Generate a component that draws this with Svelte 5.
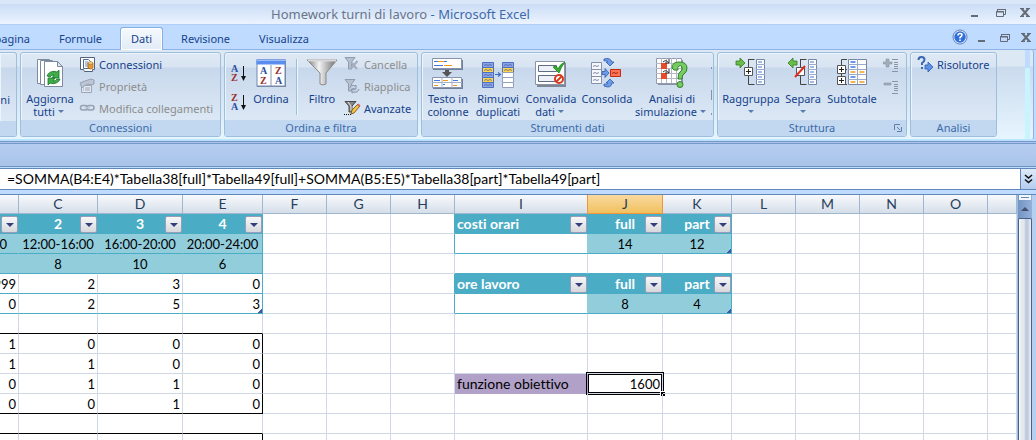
<script>
  const icons = {
    refresh: `<g transform="translate(2 0)"><g stroke="#7d8aa0" fill="#fff"><path d="M2.500 2.500h12l3 3v21h-15z"/><path d="M5.500 3.500h12l3 3v21h-15z"/><path d="M9.500 4.500h13l5 5v20h-18z"/><path d="M22.500 4.500v5h5z" fill="#dfe5ee"/></g><path d="M12 19a7 6 0 0 1 10-4l2-2v8h-7l2-3a4 4 0 0 0-4 2z" fill="#3fae49" stroke="#16742a" stroke-width=".8"/><path d="M25 22a7 6 0 0 1-10 4l-2 2v-7h7l-2 3a4 4 0 0 0 4-2z" fill="#3fae49" stroke="#16742a" stroke-width=".8"/></g>`,
    connections: `<path d="M1.500 1.500h14v12h-2v2h-8l-1-2h-3z" fill="#fff" stroke="#53627a"/><path d="M4.500 3.500h5l2 2v7h-7z" fill="#fff" stroke="#4d678f"/><path d="M6 6h3M6 8h3M6 10h3" stroke="#6c87b5"/><path d="M9 7h5v5q-2.500 2-5 0z" fill="#e29a33" stroke="#a05f13" stroke-width=".7"/><ellipse cx="11.500" cy="7" rx="2.500" ry="1.200" fill="#ffe2a0" stroke="#a05f13" stroke-width=".6"/>`,
    properties: `<path d="M2.500 7.500h10v7h-10z" fill="#e4e9f0" stroke="#9aa6b8"/><path d="M4 10h1M6 10h5M4 12h1M6 12h5" stroke="#9aa6b8"/><path d="M1 5l5-2 3-1 3-1 3 1v4l-3 1-3-1-4 2-2 2z" fill="#bcc6d5" stroke="#95a1b4"/>`,
    links: `<g fill="none" stroke="#96a1b2" stroke-width="1.600"><rect x="1.500" y="5.500" width="7" height="4.500" rx="2.200"/><rect x="8" y="5.500" width="7" height="4.500" rx="2.200"/><path d="M5.500 7.800h5.500" stroke="#c0c8d4"/></g>`,
    sort: `<g transform="translate(1 0)"><rect x="2" y="4" width="29" height="26" fill="#7d8ba3"/><rect x="2" y="3" width="28" height="26" fill="#fff" stroke="#7389ad"/><path d="M1.500 2.500h29v5h-29z" fill="#5b8def"/><path d="M2 3.500h28" stroke="#9dbcf8"/><path d="M16 8v21" stroke="#8b97ab"/><g class="letters"><text x="5" y="17" fill="#2d4f9e">A</text><text x="5" y="27" fill="#9c2b2b">Z</text><text x="20" y="17" fill="#9c2b2b">Z</text><text x="20" y="27" fill="#2d4f9e">A</text></g></g>`,
    funnel: `<defs><linearGradient id="metal"><stop offset="0" stop-color="#777"/><stop offset=".4" stop-color="#f3f3f3"/><stop offset="1" stop-color="#6c6c6c"/></linearGradient></defs><path d="M2 3h30L21 16v11q-3 2-6 0V16z" fill="url(#metal)" stroke="#8a8a8a"/><path d="M3 3.500h28" stroke="#d8d8d8" stroke-width="2"/>`,
    clear: `<path d="M1 1.500h10L7.500 6v7h-3V6z" fill="#b6bfcd" stroke="#8f9bae"/><path d="M7 6l6 7M13.500 5l-7 8" stroke="#a3adbd" stroke-width="2"/>`,
    reapply: `<path d="M1 1.500h10L7.500 6v7h-3V6z" fill="#b6bfcd" stroke="#8f9bae"/><path d="M6 10q1-4 5-2l1-1v4H8M15 11q-1 4-5 3l-2 1v-4h3" fill="#c8d1de" stroke="#8696b0"/>`,
    advanced: `<path d="M1 1.500h11L8 6v6H5V6z" fill="#858585" stroke="#484848"/><path d="M4 2l3 4v5" stroke="#eee" fill="none"/><path d="M0 14.500h8" stroke="#111" stroke-dasharray="1 1"/><path d="M7 14l1-4 6-6 2 2-6 7z" fill="#f5c445" stroke="#6b4a1a" stroke-width=".8"/><path d="M13 5l1.500-1.500 2 2L15 7z" fill="#d66a5c"/>`,
    textcols: `<path d="M2 3h30v10H2zM2 22h30v10H2z" fill="#71809a"/><path d="M1.500 1.500h29v10h-29zM1.500 20.500h29v10h-29z" fill="#fff" stroke="#8794ab"/><path d="M3 4.500h4M13 4.500h3M3 8.500h9M3 23.500h6M22 23.500h5M12 27.500h2" stroke="#4678dc"/><path d="M7 4.500h6M13 8.500h8M12 23.500h5M3 28.500h4M22 28.500h4" stroke="#f29a1f"/><path d="M1 25.500h30M11 20v11M21 20v11" stroke="#a5b1c4"/><path d="M14 13h4v2h3l-5 5-5-5h3z" fill="#555"/>`,
    dedupe: `<g stroke="#4f6fc0"><path d="M1.500 5.500h11v25h-11zM21.500 5.500h11v5h-11z" fill="#8ba4e6"/><path d="M1.500 10.500h11v5h-11zM1.500 20.500h11v5h-11zM21.500 10.500h11v5h-11z" fill="#ffd54a"/><path d="M21.500 15.500h11v5h-11zM21.500 20.500h11v5h-11zM21.500 25.500h11v5h-11z" fill="#fff" stroke="#93a0b8"/></g><path d="M3 8.500l2-1 2 1 2-1 2 1M3 13.500l2-1 2 1 2-1 2 1M3 18.500l2-1 2 1 2-1 2 1M3 23.500l2-1 2 1 2-1 2 1M3 28.500l2-1 2 1 2-1 2 1M23 8.500l2-1 2 1 2-1 2 1M23 13.500l2-1 2 1 2-1 2 1" fill="none" stroke="#405894" stroke-width=".7"/><path d="M14 17.500h5M17 15.500l2.500 2-2.500 2" fill="none" stroke="#3e6bc9" stroke-width="1.200"/>`,
    validate: `<path d="M3 6h29v24H3z" fill="#7d8797"/><path d="M1.500 4.500h29v23h-29z" fill="#fff" stroke="#8a94a5"/><path d="M4.500 8.500h18v6h-18zM4.500 18.500h18v6h-18z" fill="#eef1f7" stroke="#606c82"/><path d="M19 10l3-1 2 3q2-5 7-7-4 5-6 11z" fill="#35b02d" stroke="#17821b" stroke-width=".8"/><circle cx="25" cy="22" r="4" fill="#fff" stroke="#d63a1e" stroke-width="2"/><path d="M22 25l6-6" stroke="#d63a1e" stroke-width="2"/>`,
    consolidate: `<g transform="translate(-3 0)"><g fill="#f6f8fc" stroke="#8391ac"><path d="M4.500 5.500h10v7h-10zM4.500 12.500h10v7h-10zM4.500 19.500h10v7h-10z"/></g><path d="M6 9.500l2-1 2 1 2-1M6 16.500l2-1 2 1 2-1M6 23.500l2-1 2 1 2-1" fill="none" stroke="#7c8aa6"/><path d="M23.500 12.500h10v7h-10z" fill="#ff7354" stroke="#c02e16"/><path d="M25 16.500l2-1 2 1 2-1" stroke="#a22410" fill="none"/><g fill="#6d9be8" stroke="#2e5cab" stroke-width=".8"><path d="M15 14.500h3v-3l4 4.500-4 4.500v-3h-3z"/><path d="M17 2q6-2 8 3h2l-4 4-4-4h2q-1-2-4-1z"/><path d="M17 29q7 3 8-3h2l-4-4-4 4h2q-1 2-4 1z"/></g></g>`,
    whatif: `<path d="M3 3h25v25H3z" fill="#8792a6"/><path d="M1.500 1.500h25v25h-25z" fill="#fff" stroke="#929bad"/><path d="M6.500 1v25M11.500 1v25M16.500 1v25M21.500 1v25M1 6.500h25M1 11.500h25M1 16.500h25M1 21.500h25" stroke="#b2bac8"/><path d="M6 6h6v6H6zM6 16h6v6H6z" fill="#e84b2a"/><path d="M8 5q3-3 6 1M14 2v4h-4M8 15q3-3 6 1M14 12v4h-4" stroke="#333" fill="none"/><path d="M17 11q0-6 7-6 8 0 8 6 0 4-3 6-2 1-2 5h-4q0-6 2-7 3-2 2-5-1-2-3-1-2 1-1 4-5 1-6-2z" fill="#78ca62" stroke="#2d8426"/><circle cx="25" cy="27.500" r="3" fill="#78ca62" stroke="#2d8426"/>`,
    group: `<path d="M14.500 2.500h6M14.500 2v25.500h6" fill="none" stroke="#444"/><path d="M10.500 10.500h8v8h-8z" fill="#fff" stroke="#555"/><path d="M12 14.500h5M14.500 12v5" stroke="#222"/><path d="M22.500 2.500h8v25h-8z" fill="#fff" stroke="#7686a3"/><path d="M22 7.500h9M22 12.500h9M22 17.500h9M22 22.500h9" stroke="#9aabc7"/><path d="M24 5h4M24 10h4M24 15h4M24 20h4M24 25h4" stroke="#3f78df" stroke-width="1.200"/><path d="M2 4h4V1l5 5-5 5V8H2z" fill="#69bd48" stroke="#317c1e" stroke-width=".8"/>`,
    ungroup: `<path d="M14.500 2.500h6M14.500 2v25.500h6" fill="none" stroke="#444"/><path d="M10.500 10.500h8v8h-8z" fill="#fff" stroke="#555"/><path d="M9 20l10-11" stroke="#e12b20" stroke-width="2"/><path d="M22.500 2.500h8v25h-8z" fill="#fff" stroke="#7686a3"/><path d="M22 7.500h9M22 12.500h9M22 17.500h9M22 22.500h9" stroke="#9aabc7"/><path d="M24 5h4M24 10h4M24 15h4M24 20h4M24 25h4" stroke="#3f78df" stroke-width="1.200"/><path d="M11 4H7V1L2 6l5 5V8h4z" fill="#69bd48" stroke="#317c1e" stroke-width=".8"/>`,
    subtotal: `<path d="M12 2.500H6.500v25H12M7 12.500h5" fill="none" stroke="#444"/><path d="M2.500 8.500h8v8h-8zM2.500 19.500h8v8h-8z" fill="#fff" stroke="#555"/><path d="M4 12.500h5M6.500 10v5M4 23.500h5M6.500 21v5" stroke="#222"/><path d="M13.500 2.500h18v25h-18z" fill="#fff" stroke="#7686a3"/><path d="M22.500 2v25M13 7.500h18M13 12.500h18M13 17.500h18M13 22.500h18" stroke="#9aabc7"/><path d="M15.500 5h5M15.500 10h5M15.500 20h5" stroke="#3f78df" stroke-width="1.300"/><path d="M15.500 15h5M24.500 15h5M15.500 25h5M24.500 25h5" stroke="#f29a1f" stroke-width="1.300"/>`,
    showDetail: `<path d="M0 4h3V1h3v3h3v2H6v3H3V6H0z" fill="#a4adbb" stroke="#8c96a6" stroke-width=".6"/><path d="M9 1.500h6M11 4.500h4M11 6.500h4M11 8.500h4M11 10.500h4M9 13.500h6" stroke="#8994a8"/>`,
    hideDetail: `<path d="M1 3h7v2H1z" fill="#a4adbb" stroke="#8c96a6" stroke-width=".6"/><path d="M9 1.500h6M11 4.500h4M11 6.500h4M11 8.500h4M11 10.500h4M9 13.500h6" stroke="#8994a8"/>`,
    solver: `<path d="M1.500 4q0-3 3-3t3 2.500q0 2-2.500 3.500v2" fill="none" stroke="#3b66b5" stroke-width="2"/><path d="M4 11h2v2H4z" fill="#3b66b5"/><path d="M8 9h3V6l5 5-5 5v-3H8z" fill="#5f93e6" stroke="#2c5aae" stroke-width=".8"/>`,
    help: `<circle cx="8" cy="8" r="6.500" fill="#2f6fdc" stroke="#e9f2ff" stroke-width="1.500"/><circle cx="8" cy="8" r="7" fill="none" stroke="#2a4f92" stroke-width=".7"/><path d="M6 6.500q0-2 2-2t2 1.600q0 1.200-2 2.400v1M8 10.500v1.500" fill="none" stroke="#fff" stroke-width="1.600"/>`,
    minimize: `<path d="M4 11h7v2H4z" fill="#646b76"/>`,
    restore: `<path d="M5.500 7V5.500h8v5H12" fill="none" stroke="#646b76"/><path d="M4.500 7.500h7v5h-7z" fill="none" stroke="#646b76"/><path d="M4 8h8M5 5.500h9" stroke="#646b76"/>`,
    close: `<path d="M4.500 4.500l7 8M11.500 4.500l-7 8" stroke="#646b76" stroke-width="2"/><path d="M3 4.500h4M9 4.500h4M3 12.500h4M9 12.500h4" stroke="#646b76"/>`
  };

  const tabs = ['pagina', 'Formule', 'Dati', 'Revisione', 'Visualizza'];
  let activeTab = 'Dati';
  let formula = '=SOMMA(B4:E4)*Tabella38[full]*Tabella49[full]+SOMMA(B5:E5)*Tabella38[part]*Tabella49[part]';

  const connectionItems = [
    { icon: 'connections', label: 'Connessioni' },
    { icon: 'properties', label: 'Proprietà', disabled: true },
    { icon: 'links', label: 'Modifica collegamenti', disabled: true }
  ];
  const filterItems = [
    { icon: 'clear', label: 'Cancella', disabled: true },
    { icon: 'reapply', label: 'Riapplica', disabled: true },
    { icon: 'advanced', label: 'Avanzate' }
  ];

  // columns without a width take what is left of the window
  const columns = [
    { id: 'B', width: 19 },
    { id: 'C', width: 79 },
    { id: 'D', width: 85 },
    { id: 'E', width: 80 },
    { id: 'F', width: 64 },
    { id: 'G', width: 64 },
    { id: 'H', width: 64 },
    { id: 'I', width: 133 },
    { id: 'J', width: 75 },
    { id: 'K', width: 69 },
    { id: 'L', width: 64 },
    { id: 'M', width: 64 },
    { id: 'N', width: 64 },
    { id: 'O', width: 64 },
    { id: 'P' }
  ];
  const rows = Array.from({ length: 13 }, (_, i) => i + 1);

  const cells = {};

  function put(row, first, values, style) {
    const start = columns.findIndex((c) => c.id === first);
    values.forEach((value, i) => {
      cells[columns[start + i].id + row] = { value, style };
    });
  }

  function addStyle(key, style) {
    cells[key] = { value: '', ...cells[key], style: (cells[key]?.style ?? '') + ' ' + style };
  }

  put(1, 'B', ['', '2', '3', '4'], 'head');
  put(2, 'B', ['00', '12:00-16:00', '16:00-20:00', '20:00-24:00'], 'band');
  put(3, 'B', ['', '8', '10', '6'], 'band');
  put(4, 'B', ['999', '2', '3', '0'], 'num teal-bottom');
  put(5, 'B', ['0', '2', '5', '3'], 'num teal-bottom');
  put(6, 'B', ['', '', '', ''], 'black-bottom');
  put(7, 'B', ['1', '0', '0', '0'], 'num');
  put(8, 'B', ['1', '1', '0', '0'], 'num');
  put(9, 'B', ['0', '1', '1', '0'], 'num');
  put(10, 'B', ['0', '0', '1', '0'], 'num black-bottom');
  put(11, 'B', ['', '', '', ''], 'black-bottom');
  addStyle('B2', 'clipped');
  ['E2', 'E3', 'E4', 'E5'].forEach((k) => addStyle(k, 'teal-right'));
  ['E7', 'E8', 'E9', 'E10', 'E12', 'E13'].forEach((k) => addStyle(k, 'black-right'));

  put(1, 'I', ['costi orari', 'full', 'part'], 'head');
  put(2, 'I', ['', '14', '12'], 'band');
  put(4, 'I', ['ore lavoro', 'full', 'part'], 'head');
  put(5, 'I', ['', '8', '4'], 'band');
  ['I1', 'I4'].forEach((k) => addStyle(k, 'left'));
  ['I2', 'I5'].forEach((k) => addStyle(k, 'blank'));
  ['K2', 'K5'].forEach((k) => addStyle(k, 'teal-right'));
  ['H1', 'H2', 'H4', 'H5'].forEach((k) => addStyle(k, 'teal-right'));
  ['I3', 'J3', 'K3'].forEach((k) => addStyle(k, 'teal-bottom'));
  ['E5', 'K2', 'K5'].forEach((k) => addStyle(k, 'corner'));
  put(9, 'I', ['funzione obiettivo'], 'label');
  put(9, 'J', ['1600'], 'num selected');
</script>

{#snippet icon(name, size)}
  <svg width={size} height={size} viewBox="0 0 {size} {size}" aria-hidden="true">{@html icons[name]}</svg>
{/snippet}

{#snippet bigButton(name, lines, cls, arrow)}
  <button class="big {cls}" type="button">
    {@render icon(name, 34)}
    <span>{lines[0]}</span>
    <span class="second">{lines[1] ?? ''}{#if arrow}<i class="arrow"></i>{/if}</span>
  </button>
{/snippet}

{#snippet smallButton(item)}
  <button class="small" type="button" disabled={item.disabled}>
    {@render icon(item.icon, 17)}
    <span>{item.label}</span>
  </button>
{/snippet}

{#snippet sortButton(top, bottom, label)}
  <button class="sort" type="button" aria-label={label}>
    <svg width="17" height="18" viewBox="0 0 17 18">
      <g class="letters">
        <text x="0" y="8" fill={top === 'A' ? '#2d4f9e' : '#9c2b2b'}>{top}</text>
        <text x="0" y="17" fill={bottom === 'A' ? '#2d4f9e' : '#9c2b2b'}>{bottom}</text>
      </g>
      <path d="M12.500 2v13" stroke="#111" />
      <path d="M10 12h5l-2.500 5z" fill="#111" />
    </svg>
  </button>
{/snippet}

{#snippet windowButtons()}
  <button type="button" aria-label="Riduci a icona">{@render icon('minimize', 16)}</button>
  <button type="button" aria-label="Ripristina">{@render icon('restore', 16)}</button>
  <button type="button" aria-label="Chiudi">{@render icon('close', 16)}</button>
{/snippet}

<div class="app">
  <header class="titlebar">
    <h1>Homework turni di lavoro <span>- Microsoft Excel</span></h1>
    <div class="window-buttons">{@render windowButtons()}</div>
  </header>

  <nav class="tabs">
    {#each tabs as tab, i}
      <button
        type="button"
        class="tab"
        class:first={i === 0}
        class:active={tab === activeTab}
        on:click={() => (activeTab = tab)}>{tab}</button>
    {/each}
    <div class="window-buttons doc">
      <button type="button" class="help" aria-label="Guida">{@render icon('help', 16)}</button>
      {@render windowButtons()}
    </div>
  </nav>

  <div class="ribbon">
    <section class="group external">
      <div class="body"><span>ni</span></div>
      <div class="caption"></div>
    </section>

    <section class="group connections">
      <div class="body">
        {@render bigButton('refresh', ['Aggiorna', 'tutti'], 'w58', true)}
        <div class="stack">
          {#each connectionItems as item}{@render smallButton(item)}{/each}
        </div>
      </div>
      <div class="caption">Connessioni</div>
    </section>

    <section class="group filter">
      <div class="body">
        <div class="stack sorts">
          {@render sortButton('A', 'Z', 'Ordina dalla A alla Z')}
          {@render sortButton('Z', 'A', 'Ordina dalla Z alla A')}
        </div>
        {@render bigButton('sort', ['Ordina'], 'w44', false)}
        <div class="divider"></div>
        {@render bigButton('funnel', ['Filtro'], 'w44', false)}
        <div class="stack">
          {#each filterItems as item}{@render smallButton(item)}{/each}
        </div>
      </div>
      <div class="caption">Ordina e filtra</div>
    </section>

    <section class="group tools">
      <div class="body">
        {@render bigButton('textcols', ['Testo in', 'colonne'], 'w50', false)}
        {@render bigButton('dedupe', ['Rimuovi', 'duplicati'], 'w50', false)}
        {@render bigButton('validate', ['Convalida', 'dati'], 'w56', true)}
        {@render bigButton('consolidate', ['Consolida'], 'w56', false)}
        {@render bigButton('whatif', ['Analisi di', 'simulazione'], 'w74', true)}
        <svg class="edge" width="1" height="62" viewBox="0 0 1 62" aria-hidden="true">
          <path d="M.5 14v2M.5 37v10M.5 60v2" stroke="#7f93b3" />
        </svg>
      </div>
      <div class="caption">Strumenti dati</div>
    </section>

    <section class="group outline">
      <div class="body">
        {@render bigButton('group', ['Raggruppa'], 'w64', true)}
        {@render bigButton('ungroup', ['Separa'], 'w40', true)}
        {@render bigButton('subtotal', ['Subtotale'], 'w58', false)}
        <div class="stack">
          <button class="small" type="button" disabled aria-label="Mostra dettagli">{@render icon('showDetail', 16)}</button>
          <button class="small" type="button" disabled aria-label="Nascondi dettagli">{@render icon('hideDetail', 16)}</button>
        </div>
      </div>
      <div class="caption">
        Struttura
        <button class="launcher" type="button" aria-label="Impostazioni struttura">
          <svg width="8" height="8" viewBox="0 0 8 8">
            <path d="M.5 6V.5H6" fill="none" stroke="#5f7fa8" />
            <path d="M3 3l3 3M7.500 3v4.500H3" fill="none" stroke="#5f7fa8" />
          </svg>
        </button>
      </div>
    </section>

    <section class="group analysis">
      <div class="body">
        <div class="stack">{@render smallButton({ icon: 'solver', label: 'Risolutore' })}</div>
      </div>
      <div class="caption">Analisi</div>
    </section>

    <div class="ribbon-end"></div>
  </div>

  <div class="strip"></div>

  <div class="formula-bar">
    <input type="text" aria-label="Barra della formula" bind:value={formula} />
    <button type="button" aria-label="Espandi barra della formula">
      <svg width="9" height="10" viewBox="0 0 9 10">
        <path d="M1 1l3.500 3L8 1M1 5.500l3.500 3 3.500-3" fill="none" stroke="#111" stroke-width="1.600" />
      </svg>
    </button>
  </div>

  <div class="sheet">
    <table>
      <colgroup>
        {#each columns as col}
          <col style={col.width ? `width: ${col.width}px` : ''} />
        {/each}
      </colgroup>
      <thead>
        <tr>
          {#each columns as col, i}
            <th class:active={col.id === 'J'} class:before={col.id === 'I'}>
              {i > 0 && col.width ? col.id : ''}
            </th>
          {/each}
        </tr>
      </thead>
      <tbody>
        {#each rows as row}
          <tr>
            {#each columns as col}
              {@const cell = cells[col.id + row]}
              <td class={cell?.style ?? ''}>
                {#if cell}
                  <div class="cell">{cell.value}</div>
                  {#if cell.style.startsWith('head')}
                    <button class="dropdown" type="button" aria-label="Filtra colonna {col.id}"><i></i></button>
                  {/if}
                {/if}
              </td>
            {/each}
          </tr>
        {/each}
      </tbody>
    </table>
    <div class="scrollbar">
      <div class="split"></div>
      <button type="button" aria-label="Scorri in alto"><i></i></button>
      <div class="thumb"></div>
    </div>
  </div>
</div>

<style>
  :global(body) {
    margin: 0;
    overflow: hidden;
  }

  .app {
    display: flex;
    flex-direction: column;
    height: 100vh;
    overflow: hidden;
    background: #bfdbff;
    color: #15428b;
    font: 11px/13px "Noto Sans", "Open Sans", sans-serif;
    font-variant-ligatures: none;
  }

  button {
    padding: 0;
    border: none;
    background: none;
    color: inherit;
    font: inherit;
  }

  svg {
    display: block;
    flex: none;
  }

  .app :global(.letters) {
    font: bold 10px "Liberation Serif", serif;
  }

  .titlebar {
    display: flex;
    align-items: center;
    justify-content: space-between;
    flex: none;
    height: 24px;
    padding-left: 271px;
    background: linear-gradient(#d9e7f8 0 4px, #cbddf6 4px, #e9f2fe 23px);
    border-bottom: 1px solid #b0cff7;
  }

  h1 {
    margin: 0;
    padding-top: 3px;
    color: #69758a;
    font-size: 13px;
    font-weight: 400;
    line-height: 18px;
  }

  h1 span {
    color: #3e6aaa;
  }

  .window-buttons {
    display: flex;
    gap: 9px;
    padding-right: 3px;
  }

  .window-buttons.doc {
    align-items: center;
    margin-left: auto;
    padding-right: 2px;
    gap: 6px;
  }

  .tabs {
    display: flex;
    gap: 7px;
    flex: none;
    height: 24px;
    background: #bfdbff;
    border-bottom: 1px solid #8db2e3;
  }

  .tab {
    height: 23px;
    margin-top: 2px;
    padding: 0 10px 2px;
    border: 1px solid transparent;
    border-bottom: none;
    border-radius: 3px 3px 0 0;
  }

  .tab.first {
    display: flex;
    align-items: center;
    justify-content: flex-end;
    width: 41px;
  }

  .tab.active {
    background: linear-gradient(#f6fafe, #e1eaf6);
    border-color: #85b0e4;
    box-shadow: inset 0 0 0 1px #fff;
  }

  .ribbon {
    display: flex;
    gap: 3px;
    flex: none;
    height: 85px;
    margin-right: 2px;
    padding: 2px 0;
    background: linear-gradient(#dde8f5 0 16px, #cbdbee 17px, #e7f5fe 100%);
    border-right: 1px solid #8db2e3;
    border-bottom: 1px solid #b7eafc;
    border-radius: 0 3px 3px 0;
  }

  .ribbon-end {
    width: 5px;
    margin: -2px 3px -2px auto;
    background: linear-gradient(#bfdbff 0 18px, #c8f4ff 18px);
  }

  .group {
    display: flex;
    flex-direction: column;
    box-sizing: border-box;
    flex: none;
    background: linear-gradient(#dfe9f5 0, #d8e4f2 14px, #c8d8ec 15px, #dce8f5 68px);
    border: 1px solid #9ebfdb;
    border-radius: 3px;
    box-shadow: inset 1px 1px 0 #ebf3fb;
    overflow: hidden;
  }

  .external {
    width: 17px;
    border-left: none;
    border-radius: 0 3px 3px 0;
  }

  .external .body {
    justify-content: flex-end;
    padding: 40px 6px 0 0;
  }

  .connections {
    width: 201px;
  }

  .filter {
    width: 194px;
  }

  .tools {
    width: 293px;
  }

  .outline {
    width: 190px;
  }

  .analysis {
    width: 87px;
  }

  .body {
    display: flex;
    box-sizing: border-box;
    height: 68px;
  }

  .edge {
    margin: 0 1px 0 auto;
  }

  .caption {
    position: relative;
    flex: 1;
    background: #c1d8f0;
    color: #3e6aaa;
    line-height: 16px;
    text-align: center;
  }

  .launcher {
    position: absolute;
    right: 4px;
    top: 4px;
  }

  .big {
    display: flex;
    flex-direction: column;
    align-items: center;
    flex: none;
    padding-top: 4px;
    white-space: nowrap;
  }

  .big span {
    margin-top: 1px;
  }

  .big .second {
    display: flex;
    align-items: center;
    justify-content: center;
    height: 13px;
    margin: 0;
  }

  .w40 {
    width: 40px;
  }

  .w44 {
    width: 44px;
  }

  .w50 {
    width: 50px;
  }

  .w56 {
    width: 56px;
  }

  .w58 {
    width: 58px;
  }

  .w64 {
    width: 64px;
  }

  .w74 {
    width: 74px;
  }

  .arrow {
    margin: 0 3px;
    border: 3px solid transparent;
    border-top-color: #567db1;
    border-bottom: none;
  }

  .tools,
  .outline {
    padding-left: 1px;
  }

  .tools .caption,
  .outline .caption {
    margin-left: -1px;
  }

  .stack {
    display: flex;
    flex-direction: column;
    align-items: flex-start;
  }

  .small {
    display: flex;
    align-items: center;
    gap: 3px;
    height: 22px;
    padding-top: 1px;
    box-sizing: border-box;
    white-space: nowrap;
  }

  .small:disabled {
    color: #8d8d8d;
  }

  .outline .stack {
    padding: 1px 0 0 2px;
  }

  .analysis .stack {
    padding-left: 6px;
  }

  .sorts {
    gap: 11px;
    padding: 11px 1px 0 6px;
  }

  .divider {
    width: 1px;
    height: 56px;
    margin: 6px 3px 0;
    background: #9ebfdb;
    box-shadow: 1px 0 #eef5fc;
  }

  .strip {
    flex: none;
    height: 22px;
    margin-top: 1px;
    border-top: 3px double #7599ca;
    border-bottom: 1px solid #6a93c8;
    background: linear-gradient(#b5cdef, #a9c3e9);
  }

  .formula-bar {
    display: flex;
    flex: none;
    height: 20px;
    margin-top: 1px;
    border-top: 1px solid #6289b5;
    border-bottom: 1px solid #6289b5;
    background: #fff;
  }

  .formula-bar input {
    flex: 1;
    min-width: 0;
    padding: 0 0 0 7px;
    border: none;
    outline: none;
    color: #000;
    font: 14px/20px Lato, sans-serif;
  }

  .formula-bar button {
    display: flex;
    align-items: center;
    justify-content: center;
    width: 16px;
    border-left: 1px solid #6289b5;
    background: linear-gradient(#dfeafa, #b4cdef);
  }

  .sheet {
    display: flex;
    flex: 1;
    min-height: 0;
    margin-top: 4px;
    padding-right: 4px;
    border-top: 1px solid #6289b5;
    background: #b5cff0;
    overflow: hidden;
  }

  table {
    flex: 1;
    width: 0;
    align-self: flex-start;
    table-layout: fixed;
    border-spacing: 0;
    background: #fff;
    color: #000;
    font: 14px/19px Lato, sans-serif;
    font-variant-ligatures: none;
  }

  th {
    box-sizing: border-box;
    height: 19px;
    padding: 0;
    background: linear-gradient(#f8fafc, #d5dee9);
    border-right: 1px solid #9eb6ce;
    border-bottom: 1px solid #9eb6ce;
    color: #273f5a;
    font-weight: 400;
    line-height: 18px;
  }

  th.active {
    background: linear-gradient(#f9d99f, #f1c15f);
    border-color: #f29536;
  }

  th.before {
    border-right-color: #f29536;
  }

  td {
    position: relative;
    box-sizing: border-box;
    height: 20px;
    padding: 0;
    border-right: 1px solid #d0d7e5;
    border-bottom: 1px solid #d0d7e5;
    text-align: center;
  }

  .cell {
    display: flex;
    justify-content: center;
    height: 19px;
    padding: 0 2px;
    overflow: hidden;
    white-space: nowrap;
  }

  .num .cell,
  .band .cell {
    font-size: 13px;
    line-height: 20px;
  }

  .num .cell {
    justify-content: flex-end;
  }

  .left .cell,
  .label .cell {
    justify-content: flex-start;
  }

  .clipped .cell {
    justify-content: flex-end;
    padding-right: 11px;
  }

  .head {
    background: #4bacc6;
    border-color: #4bacc6;
    color: #fff;
    font-weight: 700;
  }

  .band {
    background: #92cddc;
    border-right-color: #92cddc;
    border-bottom-color: #4bacc6;
  }

  .blank {
    background: #fff;
  }

  .teal-bottom {
    border-bottom-color: #4bacc6;
  }

  .teal-right {
    border-right-color: #4bacc6;
  }

  .black-bottom {
    border-bottom-color: #000;
  }

  .black-right {
    border-right-color: #000;
  }

  .label {
    background: #b1a0c7;
    border-color: #b1a0c7;
  }

  .corner::after {
    content: '';
    position: absolute;
    right: 0;
    bottom: 0;
    width: 4px;
    height: 4px;
    background: linear-gradient(135deg, transparent 40%, #3f58a8 40%);
  }

  .selected::before {
    content: '';
    position: absolute;
    inset: -2px;
    border: 3px double #000;
  }

  .selected::after {
    content: '';
    position: absolute;
    right: -3px;
    bottom: -3px;
    width: 4px;
    height: 4px;
    background: #000;
    border: 1px solid #fff;
    border-right: none;
    border-bottom: none;
  }

  .dropdown {
    position: absolute;
    top: 2px;
    right: 0;
    display: flex;
    align-items: center;
    justify-content: center;
    box-sizing: border-box;
    width: 17px;
    height: 17px;
    background: linear-gradient(#f8f8f9, #d6d8dc);
    border: 1px solid #9a9db8;
    border-radius: 2px;
  }

  .dropdown i {
    border: 4px solid transparent;
    border-top-color: #353f7d;
    border-bottom: none;
  }

  .scrollbar {
    display: flex;
    flex-direction: column;
    width: 14px;
    border-left: 1px solid #9dbbe3;
    background: linear-gradient(90deg, #7393c2, #94b1da);
  }

  .split {
    flex: none;
    height: 1px;
    margin: 0 1px;
    border: 2px solid #f3f7fd;
    background: #6289b5;
  }

  .scrollbar button {
    display: flex;
    justify-content: center;
    flex: none;
    height: 18px;
    padding-top: 7px;
    box-sizing: border-box;
  }

  .scrollbar i {
    height: 0;
    border: 4px solid transparent;
    border-bottom-color: #44506f;
    border-top: none;
  }

  .thumb {
    flex: 1;
    background: linear-gradient(90deg, #f5f8fc 0 1px, #e4e9f0 2px 5px, #b9c7da 7px, #c3cfdf 9px, #eef2f8);
    border: 1px solid #4c6085;
    border-bottom: none;
    border-radius: 2px 2px 0 0;
  }
</style>
